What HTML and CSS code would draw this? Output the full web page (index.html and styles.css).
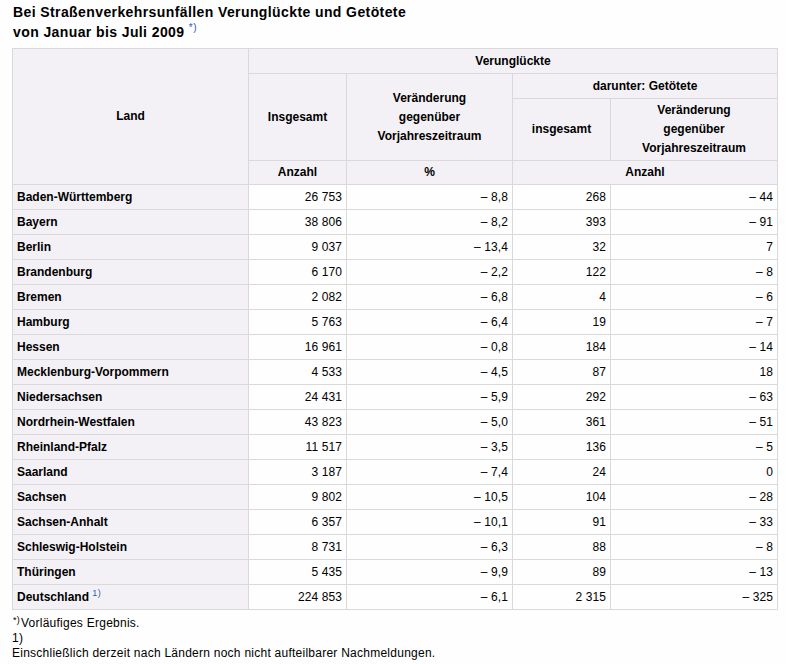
FILE: index.html
```html
<!DOCTYPE html>
<html lang="de">
<head>
<meta charset="utf-8">
<title>Verunglückte und Getötete</title>
<link rel="stylesheet" href="styles.css">
</head>
<body>
<h1 class="title">Bei Straßenverkehrsunfällen Verunglückte und Getötete<br>von Januar bis Juli 2009 <sup class="fn">*)</sup></h1>
<table class="stats">
  <colgroup>
    <col class="c-land">
    <col class="c-num">
    <col class="c-chg">
    <col class="c-num">
    <col class="c-chg2">
  </colgroup>
  <thead>
    <tr class="h1">
      <th rowspan="4">Land</th>
      <th colspan="4">Verunglückte</th>
    </tr>
    <tr class="h2">
      <th rowspan="2">Insgesamt</th>
      <th rowspan="2">Veränderung<br>gegenüber<br>Vorjahreszeitraum</th>
      <th colspan="2">darunter: Getötete</th>
    </tr>
    <tr class="h3">
      <th>insgesamt</th>
      <th>Veränderung<br>gegenüber<br>Vorjahreszeitraum</th>
    </tr>
    <tr class="h4">
      <th>Anzahl</th>
      <th>%</th>
      <th colspan="2">Anzahl</th>
    </tr>
  </thead>
  <tbody>
    <tr><th>Baden-Württemberg</th><td>26 753</td><td>– 8,8</td><td>268</td><td>– 44</td></tr>
    <tr><th>Bayern</th><td>38 806</td><td>– 8,2</td><td>393</td><td>– 91</td></tr>
    <tr><th>Berlin</th><td>9 037</td><td>– 13,4</td><td>32</td><td>7</td></tr>
    <tr><th>Brandenburg</th><td>6 170</td><td>– 2,2</td><td>122</td><td>– 8</td></tr>
    <tr><th>Bremen</th><td>2 082</td><td>– 6,8</td><td>4</td><td>– 6</td></tr>
    <tr><th>Hamburg</th><td>5 763</td><td>– 6,4</td><td>19</td><td>– 7</td></tr>
    <tr><th>Hessen</th><td>16 961</td><td>– 0,8</td><td>184</td><td>– 14</td></tr>
    <tr><th>Mecklenburg-Vorpommern</th><td>4 533</td><td>– 4,5</td><td>87</td><td>18</td></tr>
    <tr><th>Niedersachsen</th><td>24 431</td><td>– 5,9</td><td>292</td><td>– 63</td></tr>
    <tr><th>Nordrhein-Westfalen</th><td>43 823</td><td>– 5,0</td><td>361</td><td>– 51</td></tr>
    <tr><th>Rheinland-Pfalz</th><td>11 517</td><td>– 3,5</td><td>136</td><td>– 5</td></tr>
    <tr><th>Saarland</th><td>3 187</td><td>– 7,4</td><td>24</td><td>0</td></tr>
    <tr><th>Sachsen</th><td>9 802</td><td>– 10,5</td><td>104</td><td>– 28</td></tr>
    <tr><th>Sachsen-Anhalt</th><td>6 357</td><td>– 10,1</td><td>91</td><td>– 33</td></tr>
    <tr><th>Schleswig-Holstein</th><td>8 731</td><td>– 6,3</td><td>88</td><td>– 8</td></tr>
    <tr><th>Thüringen</th><td>5 435</td><td>– 9,9</td><td>89</td><td>– 13</td></tr>
    <tr><th>Deutschland <sup class="fn">1)</sup></th><td>224 853</td><td>– 6,1</td><td>2 315</td><td>– 325</td></tr>
  </tbody>
</table>
<div class="notes">
  <p class="note"><sup class="mark">*)</sup>Vorläufiges Ergebnis.</p>
  <p class="note">1)</p>
  <p class="note">Einschließlich derzeit nach Ländern noch nicht aufteilbarer Nachmeldungen.</p>
</div>
</body>
</html>
```
FILE: styles.css
```css
html, body {
  margin: 0;
  padding: 0;
  background: #fdfefd;
}
body {
  padding: 2px 9px 0 12px;
  font-family: "Liberation Sans", Arial, sans-serif;
  font-size: 12px;
  color: #000;
}
.title {
  margin: 0 0 6px 1px;
  font-size: 14px;
  font-weight: bold;
  line-height: 20px;
  letter-spacing: 0.4px;
}
.fn {
  color: #2a5db0;
  font-weight: normal;
  font-size: 9px;
  vertical-align: 5px;
  line-height: 0;
  letter-spacing: 0.5px;
}
.title .fn {
  vertical-align: 6px;
  font-size: 10px;
}
.stats {
  border-collapse: collapse;
  table-layout: fixed;
  width: 765px;
  border: 1px solid #d4d4d4;
}
.c-land { width: 236px; }
.c-num { width: 98px; }
.c-chg { width: 166px; }
.c-chg2 { width: 167px; }
.stats th, .stats td {
  border: 1px solid #d9d9d9;
  font-size: 12px;
  line-height: 15px;
  padding: 0 4px;
}
.stats th {
  background: #f3f1f5;
  font-weight: bold;
  text-align: center;
}
.stats thead th {
  line-height: 19px;
}
.h1 { height: 25px; }
.h2 { height: 25px; }
.h3 { height: 62px; }
.h4 { height: 24px; }
.stats tbody tr { height: 25px; }
.stats tbody th {
  text-align: left;
}
.stats td {
  background: #fdfefd;
  text-align: right;
  letter-spacing: 0.1px;
}
.notes {
  margin-top: 6px;
}
.note {
  margin: 0;
  line-height: 15px;
  font-size: 12px;
  letter-spacing: 0.25px;
}
.mark {
  font-size: 9px;
  vertical-align: 4px;
  line-height: 0;
  margin-right: 1px;
  margin-left: 1px;
}
```
